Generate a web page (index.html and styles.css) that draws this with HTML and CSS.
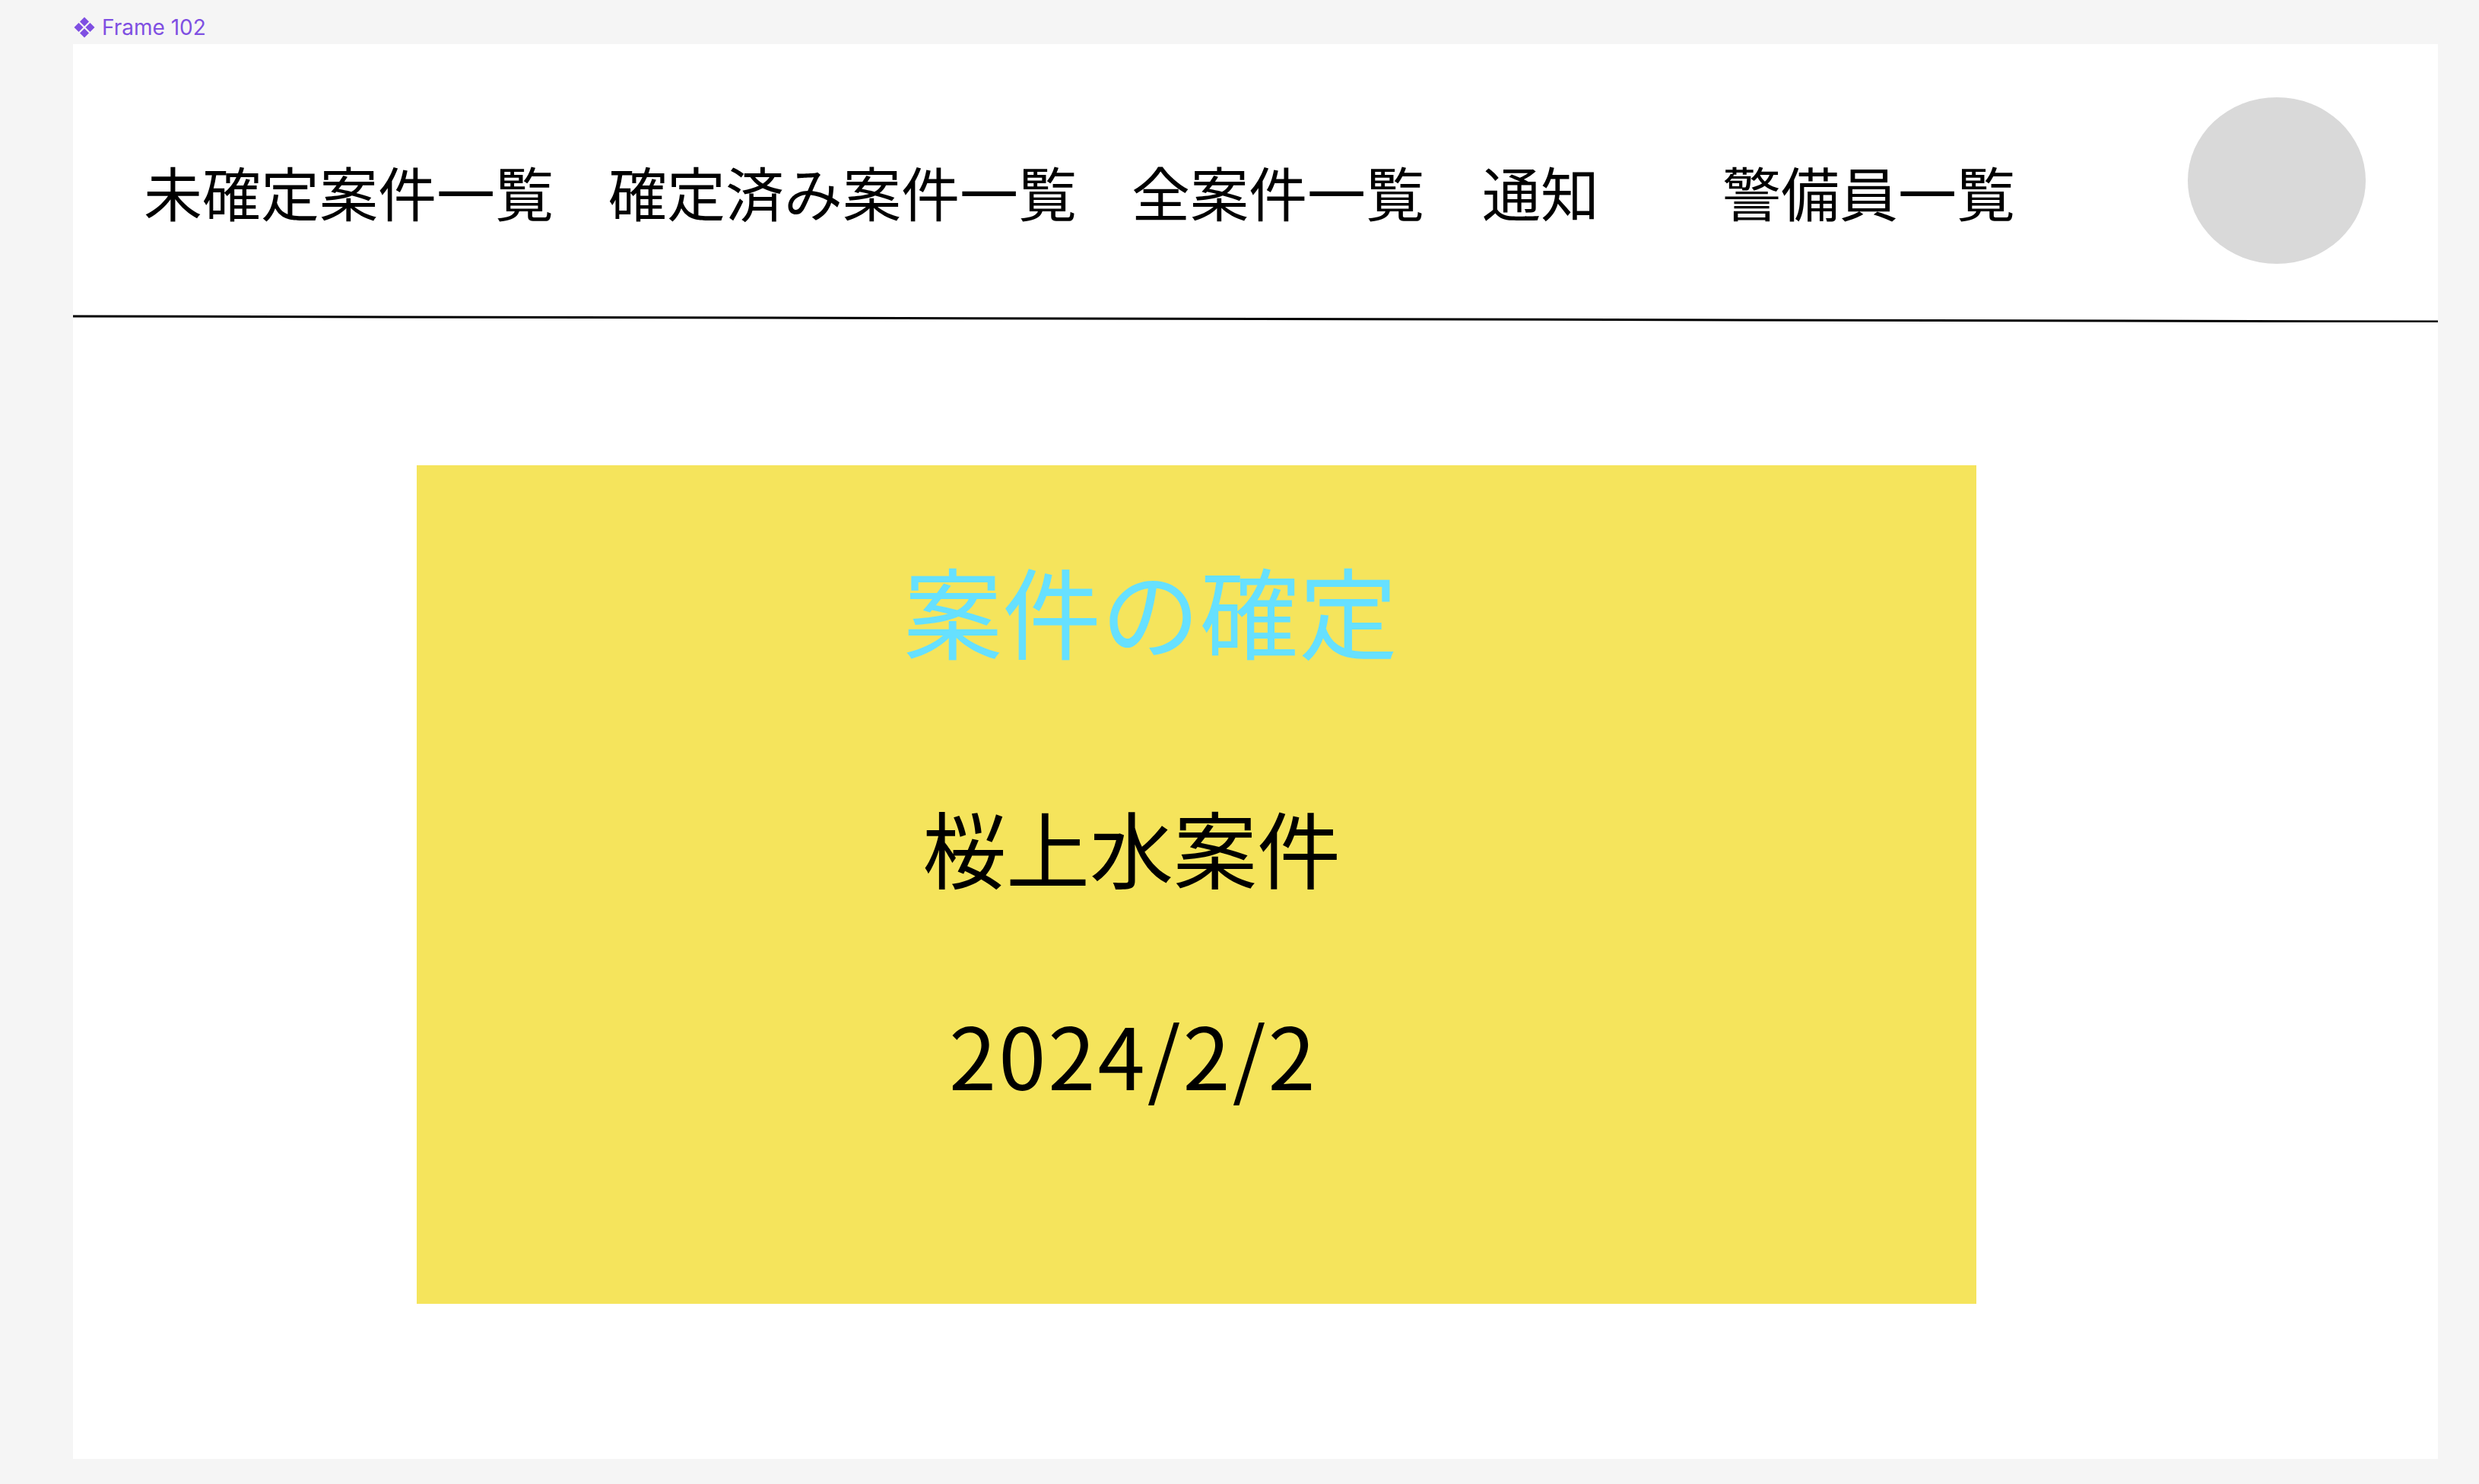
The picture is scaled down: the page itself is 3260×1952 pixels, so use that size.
FILE: index.html
```html
<!DOCTYPE html>
<html lang="ja">
<head>
<meta charset="utf-8">
<title>Frame 102</title>
<link rel="stylesheet" href="styles.css">
</head>
<body>
<div class="label">
  <svg class="label-icon" viewBox="0 0 28 28" aria-hidden="true">
    <path d="M14 0.5 L20 6.5 L14 12.5 L8 6.5 Z"/>
    <path d="M6.5 8 L12.5 14 L6.5 20 L0.5 14 Z"/>
    <path d="M21.5 8 L27.5 14 L21.5 20 L15.5 14 Z"/>
    <path d="M14 15.5 L20 21.5 L14 27.5 L8 21.5 Z"/>
  </svg>
  <span class="label-text">Frame 102</span>
</div>
<div class="frame">
  <header class="header">
    <nav class="nav">
      <a class="nav-item">未確定案件一覧</a>
      <a class="nav-item">確定済み案件一覧</a>
      <a class="nav-item">全案件一覧</a>
      <a class="nav-item nav-item-notice">通知</a>
      <a class="nav-item">警備員一覧</a>
    </nav>
    <div class="avatar"></div>
  </header>
  <svg class="divider" viewBox="0 0 3110 10" preserveAspectRatio="none" aria-hidden="true">
    <line x1="0" y1="2" x2="3110" y2="9" stroke="#000" stroke-width="3"/>
  </svg>
  <section class="card">
    <h1 class="card-title">案件の確定</h1>
    <p class="card-name">桜上水案件</p>
    <p class="card-date">2024/2/2</p>
  </section>
</div>
</body>
</html>
```
FILE: styles.css
```css
html, body {
  margin: 0;
  padding: 0;
}
body {
  background: #f5f5f5;
  width: 3260px;
  height: 1952px;
  overflow: hidden;
  font-family: "Noto Sans CJK JP", "Noto Sans", sans-serif;
  color: #000;
}
.label {
  height: 58px;
  display: flex;
  align-items: center;
  padding-left: 97px;
  box-sizing: border-box;
  gap: 9px;
  padding-top: 14px;
}
.label-icon {
  width: 28px;
  height: 28px;
  fill: #7f4fe2;
}
.label-text {
  font-family: Inter, "Noto Sans", sans-serif;
  font-size: 28px;
  color: #7f4fe2;
  line-height: 1;
}
.frame {
  margin-left: 96px;
  width: 3110px;
  height: 1861px;
  background: #fff;
  display: flex;
  flex-direction: column;
}
.header {
  height: 356px;
  box-sizing: border-box;
  display: flex;
  justify-content: space-between;
  align-items: flex-start;
  padding: 70px 95px 0 93px;
}
.nav {
  display: flex;
  gap: 72px;
  margin-top: 85px;
}
.nav-item {
  font-size: 77px;
  line-height: 1;
  white-space: nowrap;
}
.nav-item-notice {
  margin-left: 4px;
  margin-right: 90px;
}
.avatar {
  width: 234px;
  height: 219px;
  border-radius: 50%;
  background: #d9d9d9;
}
.divider {
  display: block;
  width: 3110px;
  height: 10px;
}
.card {
  margin-top: 188px;
  margin-left: 452px;
  width: 2051px;
  height: 1103px;
  background: #f5e45c;
  box-sizing: border-box;
  padding-top: 123px;
  display: flex;
  flex-direction: column;
  align-items: flex-start;
}
.card-title {
  margin: 0 0 0 640px;
  font-size: 130px;
  font-weight: 400;
  line-height: 1;
  color: #66e0ff;
}
.card-name {
  margin: 193px 0 0 665px;
  font-size: 110px;
  line-height: 1;
}
.card-date {
  margin: 161px 0 0 700px;
  font-size: 112px;
  line-height: 1;
  letter-spacing: 3px;
}
```
